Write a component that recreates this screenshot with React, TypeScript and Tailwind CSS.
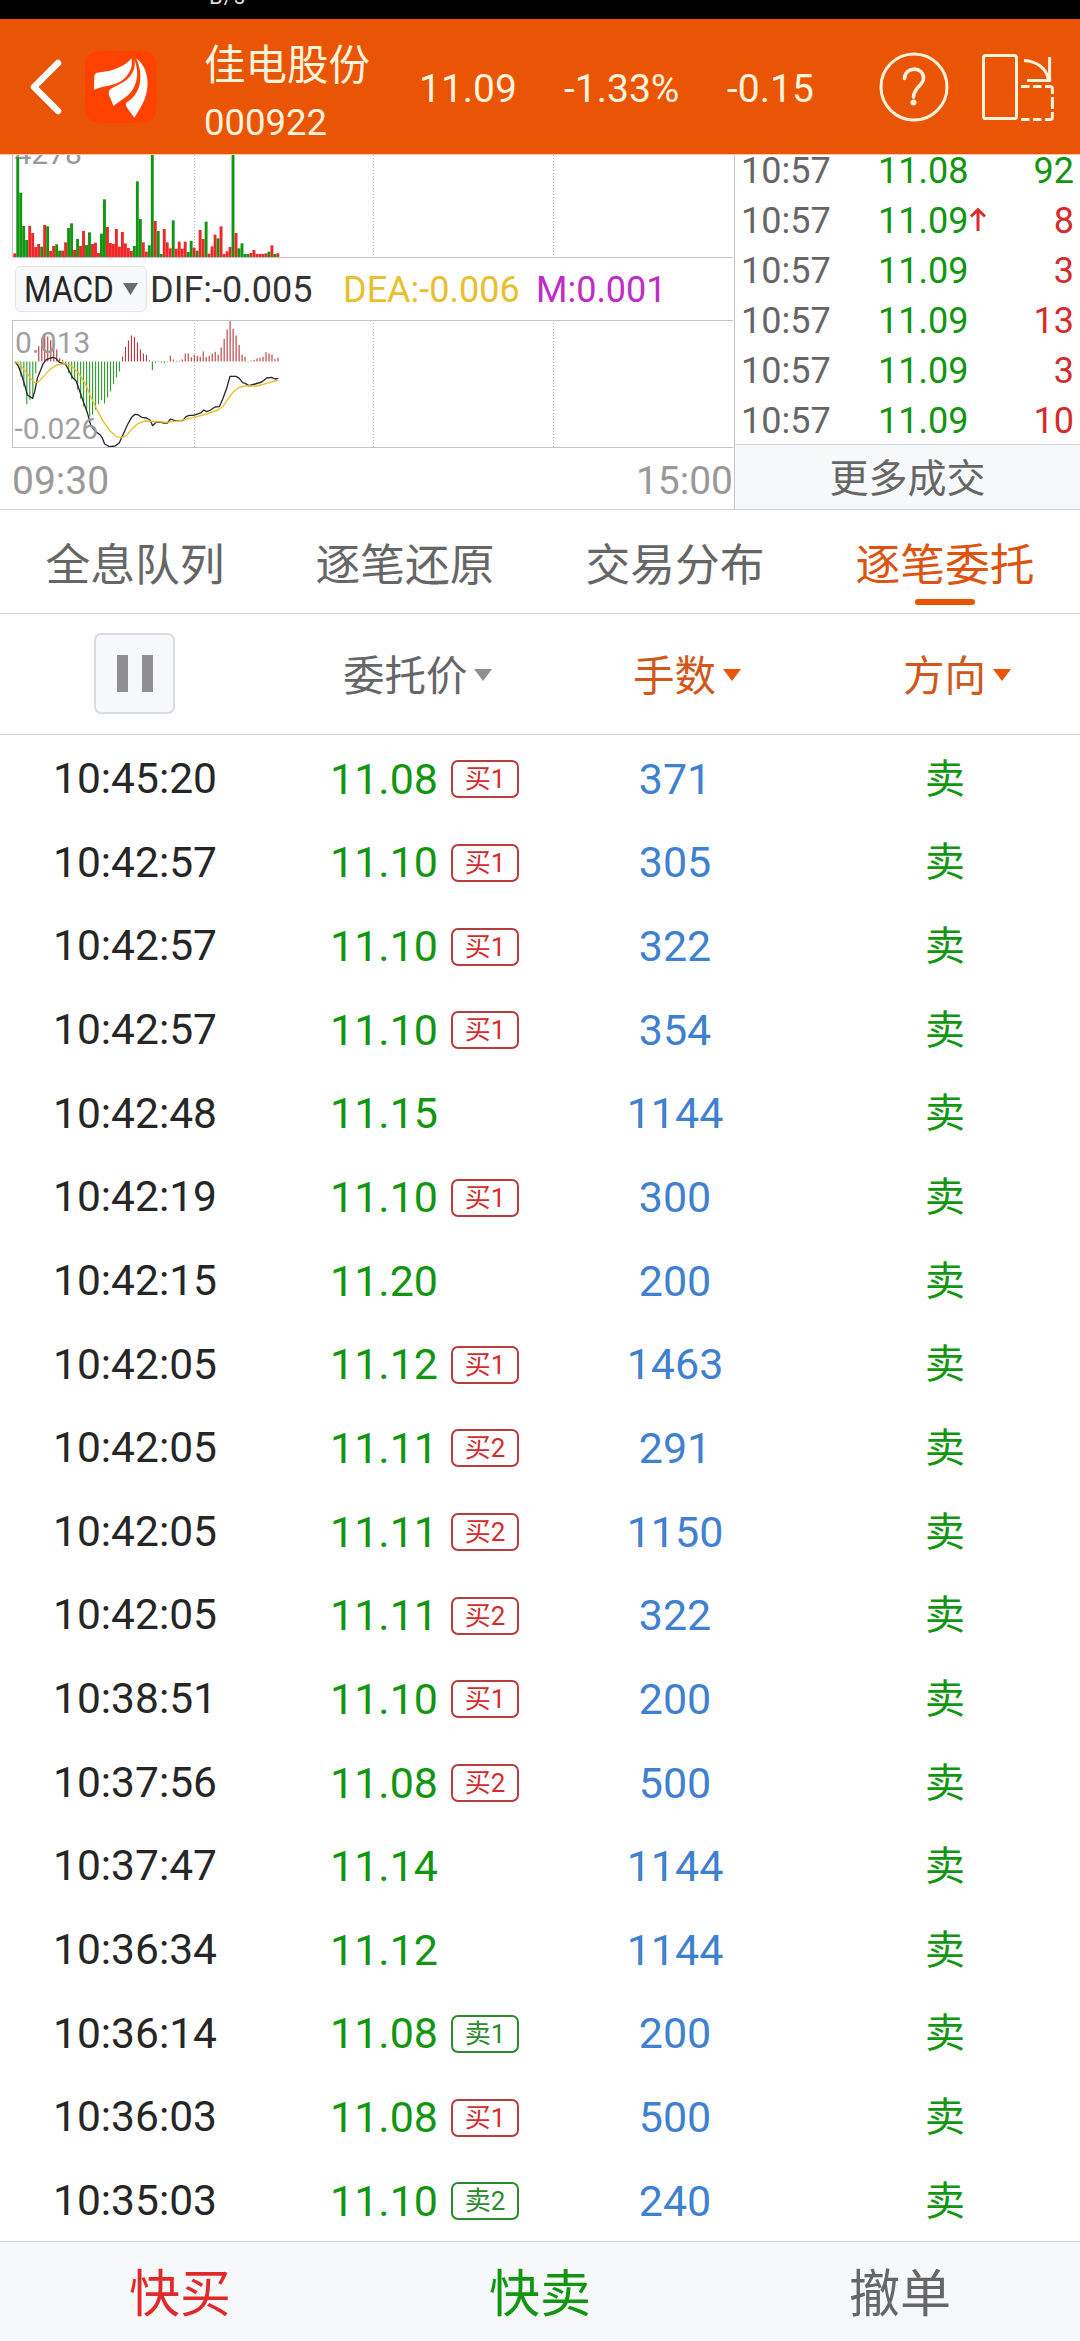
import React from 'react';
import clsx from 'clsx';

interface Trade {
  time: string;
  price: string;
  volume: number;
  side: 'buy' | 'sell';
  up?: boolean;
}

interface Order {
  time: string;
  price: string;
  level?: string;
  lots: number;
}

const trades: Trade[] = [
  { time: '10:57', price: '11.08', volume: 92, side: 'sell' },
  { time: '10:57', price: '11.09', volume: 8, side: 'buy', up: true },
  { time: '10:57', price: '11.09', volume: 3, side: 'buy' },
  { time: '10:57', price: '11.09', volume: 13, side: 'buy' },
  { time: '10:57', price: '11.09', volume: 3, side: 'buy' },
  { time: '10:57', price: '11.09', volume: 10, side: 'buy' },
];

const orders: Order[] = [
  { time: '10:45:20', price: '11.08', level: '买1', lots: 371 },
  { time: '10:42:57', price: '11.10', level: '买1', lots: 305 },
  { time: '10:42:57', price: '11.10', level: '买1', lots: 322 },
  { time: '10:42:57', price: '11.10', level: '买1', lots: 354 },
  { time: '10:42:48', price: '11.15', lots: 1144 },
  { time: '10:42:19', price: '11.10', level: '买1', lots: 300 },
  { time: '10:42:15', price: '11.20', lots: 200 },
  { time: '10:42:05', price: '11.12', level: '买1', lots: 1463 },
  { time: '10:42:05', price: '11.11', level: '买2', lots: 291 },
  { time: '10:42:05', price: '11.11', level: '买2', lots: 1150 },
  { time: '10:42:05', price: '11.11', level: '买2', lots: 322 },
  { time: '10:38:51', price: '11.10', level: '买1', lots: 200 },
  { time: '10:37:56', price: '11.08', level: '买2', lots: 500 },
  { time: '10:37:47', price: '11.14', lots: 1144 },
  { time: '10:36:34', price: '11.12', lots: 1144 },
  { time: '10:36:14', price: '11.08', level: '卖1', lots: 200 },
  { time: '10:36:03', price: '11.08', level: '买1', lots: 500 },
  { time: '10:35:03', price: '11.10', level: '卖2', lots: 240 },
];

const tabs = ['全息队列', '逐笔还原', '交易分布', '逐笔委托'];

// One bar per minute; negative volume means the minute closed lower
const volumes = [
  11, -299, -193, -93, -51, 93, 72, 30, 39, -31, 96, -92, 18, 33, -38, -19, 19, 44, -87, -101,
  21, -54, 33, 78, -36, -74, 39, 43, 12, -70, -173, 90, 42, 39, 84, 31, 75, 41, 27, 18,
  -33, -227, -114, 44, 16, -35, -310, 108, -78, -9, 84, 44, 26, -110, 25, 46, 25, 46, -15, -48,
  28, -19, 81, 54, -106, 10, 32, 67, -56, 92, 9, 17, 30, -310, 72, -26, -41, -9, -9, 12,
  21, 9, 9, 9, 11, -16, 35, -9, 11,
];

const histogram = [
  0, -10, -45, -75, -128, -115, -105, -36, 46, 70, 82, 75, 64, 52, 36, 10, 5, -8, -35, -53,
  -55, -85, -112, -135, -150, -165, -160, -145, -128, -115, -126, -108, -90, -68, -48, -30, 15, 44, 63, 78,
  74, 57, 36, 24, 20, 4, -26, -4, 2, -4, -5, -2, 17, 6, 2, 2, 6, 24, 24, 13,
  20, 17, 14, 30, 13, 17, 24, 29, 20, 42, 68, 96, 122, 98, 78, 50, 20, 14, -2, 3,
  5, 9, 11, 14, 28, 24, 21, 7, 11,
];

const difLine =
  '45,155 55,168 65,195 75,228 82,255 98,265 104,245 112,205 122,180 130,160 140,148 158,142 168,145 178,157 196,162 206,180 218,203 228,212 238,240 250,275 262,308 272,345 284,362 300,374 306,382 314,402 328,410 345,408 358,398 370,372 382,345 395,322 405,313 414,314 425,322 440,324 450,330 458,347 468,337 480,336 492,339 502,339 512,327 525,332 548,332 558,320 568,316 580,316 596,311 604,308 611,300 620,305 632,300 645,291 658,290 668,268 680,235 690,199 708,199 718,205 728,218 736,220 746,227 765,222 785,216 800,204 815,202 825,207 835,205';
const deaLine =
  '45,155 60,165 75,182 90,203 105,218 115,216 130,200 150,178 170,165 195,161 215,168 235,188 255,220 270,255 290,298 310,335 330,363 350,380 365,383 380,376 395,358 415,340 435,333 500,337 540,332 580,323 620,312 655,300 670,288 685,265 700,246 715,233 735,228 770,228 800,220 835,210';

const GREEN = '#129612';
const RED = '#ee2828';

function GridLines({ height }: { height: number }) {
  return (
    <>
      {[194.5, 373.5, 553.5].map((x) => (
        <line key={x} x1={x} x2={x} y1={0} y2={height} stroke="#b4b4b4" strokeDasharray="1 2" />
      ))}
    </>
  );
}

function VolumeChart() {
  return (
    <svg width="733" height="103" className="block">
      <GridLines height={102} />
      <text x="14.5" y="8.5" fontSize="30" fill="#999">4278</text>
      {volumes.map((v, i) => {
        const h = Math.abs(v) / 3;
        return (
          <rect key={i} x={13.3 + i * 2.99} y={102 - h} width={2.9} height={h} fill={v < 0 ? GREEN : RED} />
        );
      })}
      <path d="M12.5 0V102.5H733" fill="none" stroke="#c4c4c4" />
    </svg>
  );
}

function MacdChart() {
  return (
    <svg width="733" height="128" className="block">
      <GridLines height={127} />
      {histogram.map((v, i) => (
        <rect
          key={i}
          x={14.3 + i * 2.99}
          y={v > 0 ? 41.5 - v / 3 : 41.5}
          width={1.1}
          height={Math.abs(v) / 3}
          fill={v < 0 ? '#2e9e2e' : '#b8383c'}
        />
      ))}
      <g transform="translate(0 -10) scale(0.33333)" fill="none" strokeLinejoin="round">
        <polyline points={difLine} stroke="#2a2a2a" strokeWidth="4" />
        <polyline points={deaLine} stroke="#e9c02c" strokeWidth="4" />
      </g>
      <text x="15" y="32.5" fontSize="30" fill="#999" fillOpacity="0.95">0.013</text>
      <text x="14.5" y="119" fontSize="30" fill="#999" fillOpacity="0.95">-0.026</text>
      <path d="M733 0.5H12.5V127.5H733" fill="none" stroke="#c4c4c4" />
    </svg>
  );
}

function BrandLogo() {
  return (
    <svg width="72" height="72" viewBox="0 0 72 72">
      <rect width="71.5" height="72" rx="14" fill="#ff4200" />
      <g fill="#fff">
        <path d="M46.5 7.3C41 15 28 20.5 13 21.5Q9.8 22 9.3 25L9 38.7C20 34 30 35 37 29.5C44 24 48.5 16 46.5 7.3Z" />
        <path d="M48.6 7.3C51 12 50 20 44 26.5C38 33 29 35 24.5 39Q23 41 24 44L28.6 55C35 49 43 46.5 48 38C54 28 53 16 48.6 7.3Z" />
        <path d="M51 7.3C60 13 63.5 26 62.4 36C61.5 47 56 57 49.3 66.7L41.5 56Q40.3 53 41.5 51.5C47 48 51 44 54 36C57 26 55 15 51 7.3Z" />
      </g>
    </svg>
  );
}

function RotateIcon() {
  return (
    <svg width="76" height="70" viewBox="0 0 76 70" fill="none" stroke="#fff3dc" strokeWidth="3">
      <rect x="3.5" y="3.5" width="33" height="63" rx="2" />
      <path d="M44 8.5C56 9 67 16 68.5 28M69.6 5V30M47 28.5H71" />
      <path d="M41 34.5H49.5M53 34.5H61.5M65 34.5H70Q72.4 34.5 72.4 37V42M72.4 45V57M72.4 60V65Q72.4 67.5 70 67.5H65M61.5 67.5H53M49.5 67.5H41" />
    </svg>
  );
}

function Header() {
  return (
    <header className="flex h-[136px] shrink-0 items-center border-b border-[#f9c9a4] bg-[#e95504] text-[#fff3dc]">
      <svg width="34" height="60" viewBox="0 0 34 60" fill="none" className="ml-[29px]">
        <path d="M29 6L5 30L29 54" stroke="#fff" strokeWidth="6.5" strokeLinecap="round" strokeLinejoin="round" />
      </svg>
      <div className="ml-[22px]">
        <BrandLogo />
      </div>
      <div className="ml-[47px] flex w-[215px] flex-col pt-[12px]">
        <span className="h-[58px] text-[41.5px] leading-[58px]">佳电股份</span>
        <span className="h-[54px] text-[36.5px] leading-[56px]">000922</span>
      </div>
      <div className="flex flex-1 items-center pt-[6px] text-[39px] leading-none">
        <span className="w-[145px]">11.09</span>
        <span className="w-[163px]">-1.33%</span>
        <span>-0.15</span>
      </div>
      <svg width="70" height="70" viewBox="0 0 70 70" fill="none" stroke="#fff3dc" strokeLinecap="round">
        <circle cx="35" cy="35" r="33" strokeWidth="3" />
        <path d="M25.5 26.5C26 14 45 14 44.5 26.5C44 34 35 35 34.5 45" strokeWidth="3.6" />
        <circle cx="34.5" cy="50.5" r="3" fill="#fff3dc" stroke="none" />
      </svg>
      <div className="ml-[31px] mr-[24px]">
        <RotateIcon />
      </div>
    </header>
  );
}

function TradeRow({ trade }: { trade: Trade }) {
  return (
    <div className="flex h-[50px] shrink-0 items-center pl-[6px] pr-[6px] text-[36px] leading-none">
      <span className="w-[137px] text-[#666]">{trade.time}</span>
      <span className="text-[#129612]">{trade.price}</span>
      {trade.up && (
        <svg width="16" height="24" viewBox="0 0 16 24" fill="none" stroke="#e02a2a" strokeWidth="3" className="mb-[4px] ml-[2px]">
          <path d="M8 24V3M1 9.5L8 2.5L15 9.5" />
        </svg>
      )}
      <span className={clsx('ml-auto', trade.side === 'sell' ? 'text-[#129612]' : 'text-[#d42c2c]')}>
        {trade.volume}
      </span>
    </div>
  );
}

function Caret({ className }: { className?: string }) {
  return (
    <svg width="18" height="12" viewBox="0 0 18 12" className={className}>
      <path d="M0 0H18L9 12Z" fill="currentColor" />
    </svg>
  );
}

function OrderRow({ order }: { order: Order }) {
  const isBuy = order.level?.startsWith('买');
  return (
    <div className="grid h-[83.65px] grid-cols-4 items-center leading-none">
      <span className="text-center text-[42.5px] text-[#262626]">{order.time}</span>
      <div className="flex items-center pl-[60px]">
        <span className="w-[121px] text-[43px] text-[#129612]">{order.price}</span>
        {order.level && (
          <span
            className={clsx(
              'flex h-[38px] w-[68px] items-center justify-center rounded-[7px] border-2 text-[26px]',
              isBuy ? 'border-[#b83c3c] text-[#d42c2c]' : 'border-[#2b8a2b] text-[#2b8a2b]'
            )}
          >
            {order.level}
          </span>
        )}
      </div>
      <span className="text-center text-[43px] text-[#3f80cf]">{order.lots}</span>
      <span className="pt-px text-center text-[40px] text-[#129612]">卖</span>
    </div>
  );
}

export default function App() {
  return (
    <div className="flex h-[2341px] w-[1080px] flex-col overflow-hidden bg-[#fefefe] font-['Roboto','Noto_Sans_CJK_SC',sans-serif]">
      <div className="flex h-[19px] shrink-0 items-end overflow-hidden bg-black pl-[209px] text-[22px] leading-none text-[#ddd]">
        <span className="mb-[11px] tracking-[1px]">B/s</span>
      </div>
      <Header />

      {/* Charts and latest trades */}
      <section className="flex h-[355px] shrink-0 border-b border-[#d4d5d7]">
        <div className="flex w-[734px] flex-col">
          <VolumeChart />
          <div className="flex h-[62px] items-center pl-[15px] text-[36px] leading-none">
            <div className="flex h-[46px] w-[132px] items-center rounded-[6px] border border-[#e4e5e8] bg-[#f7f8fa] pl-[8px] text-[#262626]">
              <span className="w-[99px] origin-left scale-x-[0.88] pt-px">MACD</span>
              <svg width="15" height="12" viewBox="0 0 15 12">
                <path d="M0 0H15L7.5 12Z" fill="#6a6a6a" />
              </svg>
            </div>
            <span className="ml-[3px] w-[193px] pt-px text-[#333]">DIF:-0.005</span>
            <span className="w-[193px] pt-px text-[#e7c030]">DEA:-0.006</span>
            <span className="pt-px text-[#c02cc6]">M:0.001</span>
          </div>
          <MacdChart />
          <div className="flex flex-1 items-center justify-between pl-[12px] pr-[1px] pt-[5px] text-[39px] leading-none text-[#999]">
            <span>09:30</span>
            <span>15:00</span>
          </div>
        </div>
        <div className="flex flex-1 flex-col border-l border-[#c4c4c4]">
          <div className="flex h-[289px] flex-col justify-end overflow-hidden">
            <div className="-mb-[2px]">
              {trades.map((trade, i) => (
                <TradeRow key={i} trade={trade} />
              ))}
            </div>
          </div>
          <button className="flex-1 border-t border-[#d4d5d7] bg-[#f7f8fa] pt-[5px] text-[39px] leading-none text-[#666]">
            更多成交
          </button>
        </div>
      </section>

      <nav className="grid h-[104px] shrink-0 grid-cols-4 border-b border-[#d4d5d7] text-[44.8px] leading-[111px]">
        {tabs.map((tab, i) => {
          const active = i === 3;
          return (
            <div key={tab} className={clsx('relative h-[103px] text-center', active ? 'text-[#dc5410]' : 'text-[#666]')}>
              {tab}
              {active && (
                <span className="absolute bottom-[8px] left-1/2 h-[6px] w-[60px] -translate-x-1/2 rounded-full bg-[#e95504]" />
              )}
            </div>
          );
        })}
      </nav>

      <div className="grid h-[121px] shrink-0 grid-cols-4 items-center border-b border-[#d4d5d7] text-[41.5px] leading-none">
        <button className="mb-[2px] mr-[1px] flex h-[81px] w-[81px] items-center justify-center gap-[14px] justify-self-center rounded-[7px] border-2 border-[#d9dce0] bg-[#f7f8fa]">
          <span className="h-[37px] w-[11px] bg-[#8f8e93]" />
          <span className="h-[37px] w-[11px] bg-[#8f8e93]" />
        </button>
        <div className="flex items-center pl-[73px] pt-[5px] text-[#666]">
          委托价
          <Caret className="mb-[3px] ml-[6px] text-[#8f8e93]" />
        </div>
        <div className="flex items-center pl-[93px] pt-[5px] text-[#d2571a]">
          手数
          <Caret className="mb-[3px] ml-[7px] text-[#e95504]" />
        </div>
        <div className="flex items-center pl-[93px] pt-[5px] text-[#d2571a]">
          方向
          <Caret className="mb-[3px] ml-[7px] text-[#e95504]" />
        </div>
      </div>

      <main className="flex-1 overflow-hidden pt-[2.5px]">
        {orders.map((order, i) => (
          <OrderRow key={i} order={order} />
        ))}
      </main>

      <footer className="grid h-[100px] shrink-0 grid-cols-3 items-center border-t border-[#d4d5d7] bg-[#f7f8fa] pt-[6px] text-center text-[51px] leading-none">
        <span className="text-[#e02a2a]">快买</span>
        <span className="text-[#129612]">快卖</span>
        <span className="text-[#666]">撤单</span>
      </footer>
    </div>
  );
}
